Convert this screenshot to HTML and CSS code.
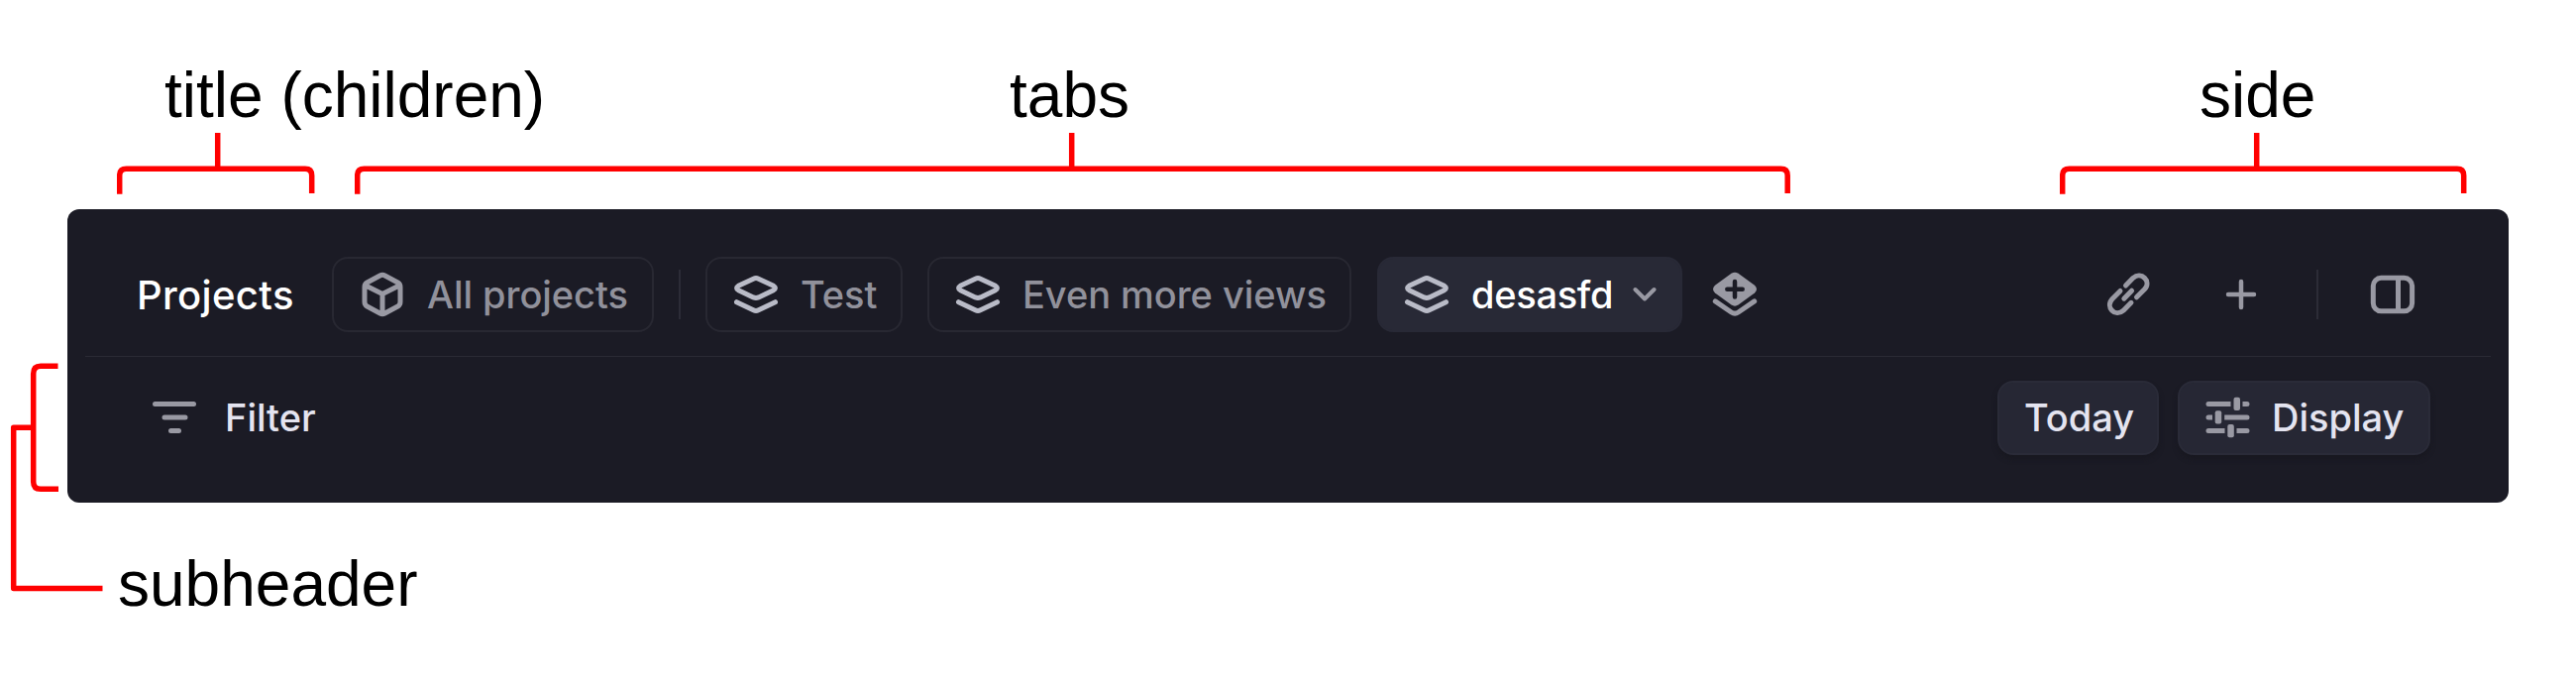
FILE: index.html
```html
<!DOCTYPE html>
<html lang="en">
<head>
<meta charset="utf-8">
<title>Header anatomy</title>
<link rel="stylesheet" href="styles.css">
</head>
<body>
<svg class="defs" width="0" height="0" aria-hidden="true">
  <symbol id="layers" viewBox="0 0 48 48">
    <path d="M21.400 8.200Q24 7 26.600 8.200L41.700 15.300Q45.200 17.500 41.700 19.700L26.600 26.900Q24 28 21.400 26.900L6.300 19.700Q2.800 17.500 6.300 15.300Z"/>
    <path d="M4.500 31.700L21.400 39.800Q24 41 26.600 39.800L43.500 31.700"/>
  </symbol>
</svg>
<section class="notes">
  <div class="note note-title">
    <div class="label">title (children)</div>
    <svg width="200" height="64" viewBox="0 0 200 64"><path d="M2.700 61.700V43Q2.700 36.300 9.500 36.300H190Q196.700 36.300 196.700 43V61M101.700 0V36"/></svg>
  </div>
  <div class="note note-tabs">
    <div class="label">tabs</div>
    <svg width="1450" height="64" viewBox="0 0 1450 64"><path d="M2.700 61.700V43Q2.700 36.300 9.500 36.300H1439.500Q1446.200 36.300 1446.200 43V61M723.700 0V36"/></svg>
  </div>
  <div class="note note-side">
    <div class="label">side</div>
    <svg width="412" height="64" viewBox="0 0 412 64"><path d="M2.700 61.700V43Q2.700 36.300 9.500 36.300H401Q407.700 36.300 407.700 43V61M198.700 0V36"/></svg>
  </div>
</section>
<main class="stage">
  <svg class="sub-line" width="68" height="390" viewBox="0 0 68 390"><path d="M58.500 158.300H41Q33.700 158.300 33.700 166V275Q33.700 282.300 41 282.300H59M33.700 220.300H13.700V382.600H103.500" stroke-linejoin="round"/></svg>
  <div class="panel">
    <header class="bar">
      <h1 class="title">Projects</h1>
      <div class="tab tab-all">
        <svg class="icon" width="48" height="48" viewBox="0 0 48 48"><path d="M21.500 5Q24 3.700 26.500 5L39.500 12Q42 13.500 42 16.500V31.500Q42 34.500 39.500 36L26.500 43Q24 44.300 21.500 43L8.500 36Q6 34.500 6 31.500V16.500Q6 13.500 8.500 12ZM7 15L24 23.500L41 15M24 23.500V43"/></svg>
        <span>All projects</span>
      </div>
      <i class="rule rule-tabs"></i>
      <div class="tab tab-test"><svg class="icon light" width="48" height="48"><use href="#layers"/></svg><span>Test</span></div>
      <div class="tab tab-more"><svg class="icon light" width="48" height="48"><use href="#layers"/></svg><span>Even more views</span></div>
      <div class="tab tab-active"><svg class="icon light" width="48" height="48"><use href="#layers"/></svg><span>desasfd</span>
        <svg class="icon chevron" width="24" height="16" viewBox="0 0 24 16"><path d="M2.500 3L12 12.500L21.500 3"/></svg>
      </div>
      <svg class="icon add-view" width="48" height="48" viewBox="0 0 48 48"><path class="solid" d="M20.500 2.800Q24 .600 27.500 2.800L44 14.800Q48 18.700 44 22.600L27.500 34.600Q24 36.800 20.500 34.600L4 22.600Q0 18.700 4 14.800Z"/><path class="cut" d="M24 11V26.400M16.300 18.700H31.700"/><path d="M4.300 30.900L20.500 42Q24 44.300 27.500 42L43.700 30.900"/></svg>
      <div class="side">
        <svg class="icon" width="48" height="48" viewBox="0 0 48 48"><path d="M21.500 15L29 7.300C37 .500 48 10.500 40.500 18.800L32.500 26.800M16 20.500L8 28.500C.500 36.700 11 47.500 19.200 40.200L27 32.300M19.800 28.200L27.600 20.200"/></svg>
        <svg class="icon plus" width="32" height="32" viewBox="0 0 32 32"><path d="M16 3V29M3 16H29"/></svg>
        <i class="rule rule-side"></i>
        <svg class="icon sidebar" width="48" height="48" viewBox="0 0 48 48"><rect x="4.300" y="7.300" width="39.300" height="33.500" rx="8"/><path d="M29.500 8V40"/></svg>
      </div>
    </header>
    <div class="subheader">
      <svg class="icon filter-icon" width="48" height="40" viewBox="0 0 48 40"><path d="M4.500 6.500H43.500M14 20H35M20.500 33.500H28.500"/></svg>
      <span class="filter">Filter</span>
      <button class="button today">Today</button>
      <button class="button display">
        <svg class="sliders" width="46" height="42" viewBox="0 0 46 42">
          <path d="M26.500 5v5H4a2.500 2.500 0 0 1 0-5ZM38.500 5H43a2.500 2.500 0 0 1 0 5H38.500ZM8 18.500v5H4a2.500 2.500 0 0 1 0-5ZM20.200 18.500H43a2.500 2.500 0 0 1 0 5H20.200ZM20.500 32v5H4a2.500 2.500 0 0 1 0-5ZM32.500 32H43a2.500 2.500 0 0 1 0 5H32.500Z"/>
          <rect x="29.500" y=".700" width="6.500" height="13.300" rx="2"/>
          <rect x="10.700" y="14.300" width="6.500" height="13.300" rx="2"/>
          <rect x="23.300" y="28" width="6.500" height="13.300" rx="2"/>
        </svg>
        <span>Display</span>
      </button>
    </div>
  </div>
</main>
<div class="label sub-label">subheader</div>
</body>
</html>
```

FILE: styles.css
```css
* { box-sizing: border-box; }
body { margin: 0; width: 2600px; height: 700px; overflow: hidden; background: #fff; }
.defs { display: block; }
svg { display: block; flex: none; }
.notes { display: flex; height: 211px; padding: 59px 0 0 118px; }
.note { flex: none; }
.note-title { width: 240px; }
.note-tabs { width: 1721px; }
.label { height: 75px; font: 64px/75px "Liberation Sans", Arial, sans-serif; color: #000; white-space: nowrap; }
.note-title .label { padding-left: 48px; }
.note-tabs .label { padding-left: 661px; }
.note-side .label { padding-left: 141px; }
.note path, .sub-line path { fill: none; stroke: #f00; stroke-width: 5.5; }
.stage { display: flex; height: 295px; }
.sub-line { overflow: visible; }
.panel { width: 2464px; height: 295.500px; flex: none; border-radius: 12px; background: #1b1b25; font-family: Inter, sans-serif; font-optical-sizing: none; }
.bar { display: flex; align-items: center; height: 149px; margin: 0 18px; padding: 24px 0 0 52px; border-bottom: 1px solid #2a2a34; }
.title { width: 197px; margin: 0; font-size: 40px; font-weight: 500; letter-spacing: .35px; color: #fff; }
.icon { fill: none; stroke: #9999a3; stroke-width: 5; stroke-linecap: round; stroke-linejoin: round; }
.light { stroke: #b9bbc7; }
.tab { display: flex; align-items: center; flex: none; height: 76px; padding-left: 25px; border: 2px solid #282832; border-radius: 16px; font-size: 38px; font-weight: 500; color: #91919b; white-space: nowrap; }
.tab span { margin-left: 21px; letter-spacing: -.05px; }
.tab-all { width: 325px; }
.tab-test { width: 199px; }
.tab-more { width: 428px; margin-left: 25px; }
.tab-active { width: 308px; margin-left: 26px; padding-left: 24px; border-color: #282936; background: #282936; color: #fff; }
.tab-active span { letter-spacing: -.3px; }
.rule { flex: none; width: 2px; height: 50px; background: #2c2c37; }
.rule-tabs { margin: 0 25px; }
.chevron { margin-left: 20px; stroke-width: 4; }
.add-view { margin-left: 29px; }
.solid { fill: #9999a3; stroke: none; }
.cut { stroke: #1b1b25; stroke-width: 4.500; }
.side { display: flex; align-items: center; margin-left: auto; }
.plus { margin-left: 74px; stroke-width: 4.500; }
.rule-side { margin-left: 60px; }
.sidebar { margin: 0 75px 0 51px; }
.subheader { display: flex; align-items: center; height: 126px; padding: 0 79px 4px 84px; color: #e4e4f0; font-size: 38px; font-weight: 500; }
.filter { margin-left: 27px; }
.button { display: flex; align-items: center; height: 75px; padding: 0 0 0 25px; border: 2px solid #2a2b38; border-radius: 16px; background: #262734; box-shadow: 0 4px 5px #181820; color: inherit; font: inherit; }
.today { width: 163px; margin-left: auto; }
.display { width: 255px; margin-left: 19px; }
.display span { margin-left: 22px; }
.sliders { fill: #9999a3; }
.sub-label { margin: 46px 0 0 119px; }
```
